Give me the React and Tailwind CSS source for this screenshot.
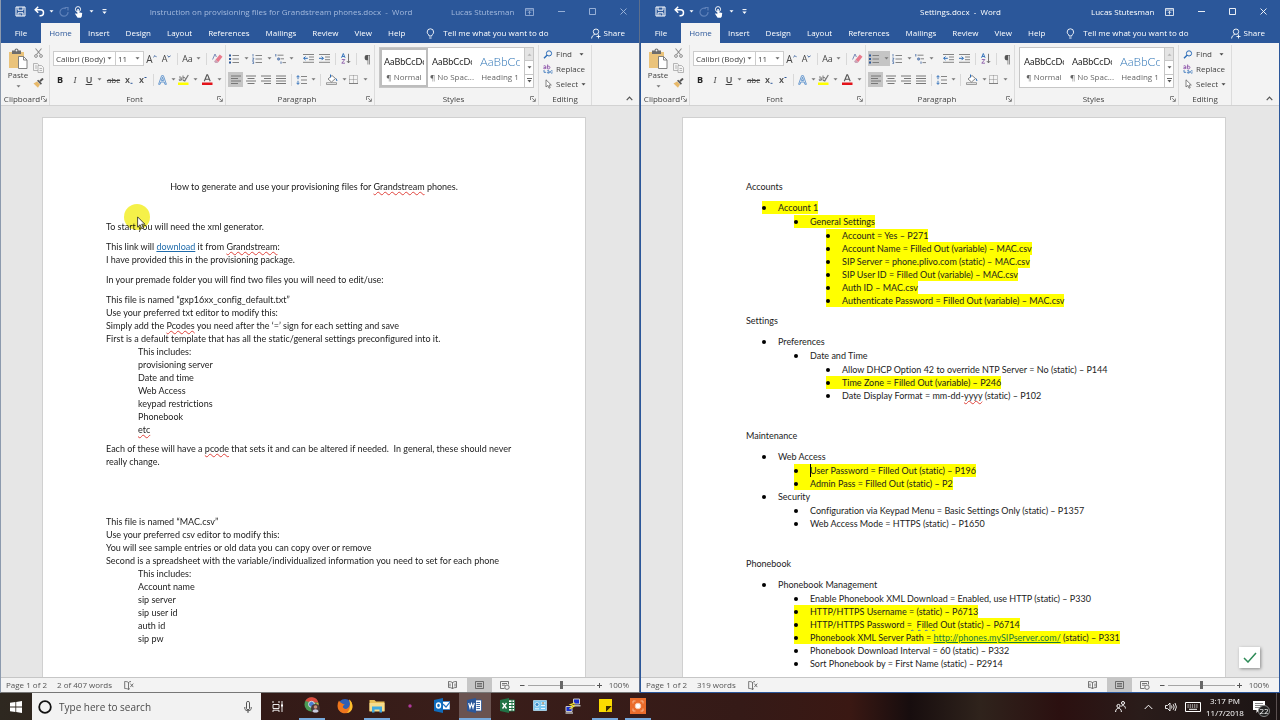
import React from 'react';

/* ---------- small shared pieces ---------- */

function Svg({ w = 12, h = 12, children, className = '' }) {
  return (
    <svg width={w} height={h} viewBox={`0 0 ${w} ${h}`} fill="none" stroke="currentColor" className={`shrink-0 ${className}`} aria-hidden="true">
      {children}
    </svg>
  );
}

const Caret = ({ className = '' }) => (
  <Svg w={5} h={3} className={className}>
    <path d="M0.5 0.3h4L2.5 2.6z" fill="currentColor" stroke="none" />
  </Svg>
);

function Tool({ label, w, active, children, className = '' }) {
  return (
    <button aria-label={label} className={`flex h-[15px] shrink-0 items-center justify-center ${w} ${active ? 'bg-[#c5c5c5]' : ''} ${className}`}>
      {children}
    </button>
  );
}

const Sep = ({ className = '' }) => <span className={`h-3 w-px shrink-0 bg-[#d8d8d8] ${className}`} />;

const Launcher = () => (
  <Svg w={6} h={6} className="text-[#666]">
    <path d="M0.5 4V0.5H4M2.2 2.2L5 5M5.4 2.6V5.4H2.6" strokeWidth="0.8" />
  </Svg>
);

function Group({ label, w, launcher = true, children }) {
  return (
    <section aria-label={label} className={`flex shrink-0 flex-col border-r border-[#dcdcdc] ${w}`}>
      <div className="h-12">{children}</div>
      <footer className="flex h-3 items-center px-[2px]">
        <span className="flex-1 text-center text-[#444]">{label}</span>
        {launcher && (
          <button aria-label={`${label} settings`}>
            <Launcher />
          </button>
        )}
      </footer>
    </section>
  );
}

/* ---------- title bar ---------- */

function TitleBar({ title, active }) {
  const dim = active ? 'text-white' : 'text-[#a3b9dd]';
  return (
    <header className="flex h-[23px] items-center text-white">
      <div className="flex w-[110px] shrink-0 items-center pl-[11px]">
        <button aria-label="Save" className="flex w-4 justify-center">
          <Svg w={11} h={11}>
            <path d="M1 1h9v9H1zM3 1v3.2h5V1M3 10V6.8h5V10M5 8.2v1.6" />
          </Svg>
        </button>
        <button aria-label="Undo" className="ml-1 flex w-5 items-center gap-1">
          <Svg w={11} h={11} className="ml-[2px]">
            <path d="M1.5 3.8h5a2.8 2.8 0 0 1 0 6H5.5M4.2 0.8L1.2 3.8l3 3" strokeWidth="1.5" />
          </Svg>
          <Caret />
        </button>
        <button aria-label="Redo" className="ml-1 flex w-4 justify-center text-[#5f82ba]">
          <Svg w={10} h={10}>
            <path d="M6.8 1.6A4 4 0 1 0 9 5M5.8 0.5H9v3" strokeWidth="1.2" />
          </Svg>
        </button>
        <button aria-label="Touch mode" className="ml-[2px] flex items-center gap-[5px]">
          <Svg w={10} h={12}>
            <circle cx="4" cy="3.2" r="2.6" strokeWidth="0.9" />
            <path d="M3.3 3h1.5v3.3l3.4.8-.4 3.4-.9 1.2H3.6L1 7.8l1-.6 1.3 1z" fill="currentColor" stroke="none" />
          </Svg>
          <Caret />
        </button>
        <button aria-label="Customize toolbar" className="ml-2">
          <Svg w={5} h={6}>
            <path d="M0.5 0.6h4" />
            <path d="M0.4 2.6h4.2L2.5 5z" fill="currentColor" stroke="none" />
          </Svg>
        </button>
      </div>
      <h1 className={`flex-1 truncate text-center whitespace-pre ${dim} ${active ? 'pl-[79px]' : ''}`}>{title}{'  -  '}Word</h1>
      <div className={`flex items-center ${dim}`}>
        <span className="w-[62px] whitespace-nowrap">Lucas Stutesman</span>
        <button aria-label="Ribbon display options" className="flex w-8 justify-center">
          <Svg w={9} h={8}>
            <path d="M0.5 0.5h8v7h-8zM0.5 2h8M4.5 6.5v-3M3 4.8l1.5-1.5L6 4.8" strokeWidth="0.8" />
          </Svg>
        </button>
        <button aria-label="Minimize" className="flex w-8 justify-center">
          <Svg w={7} h={7}><path d="M0 3.5h7" strokeWidth="0.9" /></Svg>
        </button>
        <button aria-label="Maximize" className="flex w-[30px] justify-center">
          <Svg w={7} h={7}><path d="M0.5 0.5h6v6h-6z" strokeWidth="0.9" /></Svg>
        </button>
        <button aria-label="Close" className="flex w-8 justify-center">
          <Svg w={7} h={7}><path d="M0.5 0.5l6 6M6.5 0.5l-6 6" strokeWidth="0.9" /></Svg>
        </button>
      </div>
    </header>
  );
}

const tabs = ['Insert', 'Design', 'Layout', 'References', 'Mailings', 'Review', 'View', 'Help'];

function Tabs() {
  return (
    <nav className="flex h-5 items-stretch font-medium text-white">
      <button className="w-[40px]">File</button>
      <button className="w-[39px] bg-[#f3f3f3] text-[#2b579a]">Home</button>
      {tabs.map((t) => (
        <button key={t} className="px-2">{t}</button>
      ))}
      <button className="ml-[13px] flex items-center gap-2 whitespace-nowrap">
        <Svg w={9} h={11}>
          <path d="M3 8V7C1.8 6.2 1.2 5.3 1.2 4a3.2 3.2 0 0 1 6.4 0c0 1.3-.6 2.2-1.8 3v1zM3.2 10h2.4" strokeWidth="0.9" />
        </Svg>
        Tell me what you want to do
      </button>
      <button className="mr-[14px] ml-auto flex items-center gap-[3px]">
        <Svg w={10} h={11}>
          <circle cx="5" cy="3.7" r="2.7" strokeWidth="0.9" />
          <path d="M0.6 10.5c.2-2.2 1.4-3.6 3.2-4M7.5 6.5v4M5.5 8.5h4" strokeWidth="0.9" />
        </Svg>
        Share
      </button>
    </nav>
  );
}

/* ---------- ribbon ---------- */

function ClipboardGroup() {
  return (
    <Group label="Clipboard" w="w-[49px]">
      <div className="flex h-full pl-[7px]">
        <button className="flex w-5 flex-col items-center text-[#444]">
          <Svg w={20} h={21} className="mt-[3px]">
            <path d="M1 4h15v16H1z" fill="#eac37b" stroke="none" />
            <path d="M4 2.5h2.5a2 2 0 0 1 4 0H13v3.5H4z" fill="#6d6d6d" stroke="none" />
            <circle cx="8.5" cy="2.5" r="0.9" fill="#f3f3f3" stroke="none" />
            <path d="M10.5 8.5h5l3.5 3.500v8.500h-8.500z" fill="#fff" stroke="#777" strokeWidth="0.9" />
            <path d="M15.5 8.5V12H19" stroke="#777" strokeWidth="0.9" />
          </Svg>
          <span className="leading-[12px]">Paste</span>
          <Caret className="mt-1 text-[#777]" />
        </button>
        <div className="flex flex-1 flex-col items-center justify-between pt-[3px] pb-[5px]">
          <button aria-label="Cut">
            <Svg w={9} h={10} className="text-[#8f8f8f]">
              <path d="M1.5 0.5l5 6M7.5 0.5l-5 6" strokeWidth="1.1" />
              <circle cx="2" cy="8" r="1.4" />
              <circle cx="7" cy="8" r="1.4" />
            </Svg>
          </button>
          <button aria-label="Copy">
            <Svg w={11} h={10} className="text-[#a5a5a5]">
              <path d="M0.5 0.5h4l1 1.2v5.8h-5zM2 3h2M2 5h2" strokeWidth="0.8" />
              <path d="M5 2.5h3.5l2 2v5H5z" fill="#f3f3f3" strokeWidth="0.8" />
              <path d="M6.5 5.5h2.5M6.5 7.5h2.5" strokeWidth="0.8" />
            </Svg>
          </button>
          <button aria-label="Format painter">
            <Svg w={11} h={10}>
              <path d="M0.5 5.5L4 3.5l3 3L5 9.700z" fill="#e8b969" stroke="none" />
              <path d="M4 2.8l1.2-1L9 5.6 7.8 6.8z" fill="#555" stroke="none" />
              <path d="M7 3.2L10 0.6" stroke="#555" strokeWidth="2" />
            </Svg>
          </button>
        </div>
      </div>
    </Group>
  );
}

function Combo({ label, value, w }) {
  return (
    <label className={`relative flex h-[15px] items-center border border-[#ccc] bg-white ${w}`}>
      <select aria-label={label} defaultValue={value} className="w-full appearance-none bg-transparent pl-[2px] text-[#444] outline-none">
        <option>{value}</option>
      </select>
      <Caret className="pointer-events-none absolute right-[3px] text-[#666]" />
    </label>
  );
}

function FontGroup() {
  return (
    <Group label="Font" w="w-[176px]">
      <div className="flex flex-col gap-[6px] pt-[6px] pl-[3px] text-[#444]">
        <div className="flex h-[15px] items-center">
          <Combo label="Font name" value="Calibri (Body)" w="w-[63px]" />
          <Combo label="Font size" value="11" w="-ml-px w-[29px]" />
          <Tool label="Grow font" w="w-[15px]" className="text-[10px]">A<Svg w={4} h={7}><path d="M0.4 2.2L2 0.6l1.6 1.6" stroke="#2b579a" strokeWidth="0.9" /></Svg></Tool>
          <Tool label="Shrink font" w="w-[15px]" className="text-[9px]">A<Svg w={4} h={7}><path d="M0.4 0.6L2 2.2l1.6-1.6" stroke="#2b579a" strokeWidth="0.9" /></Svg></Tool>
          <Sep className="mx-[3px]" />
          <Tool label="Change case" w="w-[21px]" className="gap-[3px] text-[9px]">Aa<Caret className="text-[#777]" /></Tool>
          <Sep className="mx-[4px]" />
          <Tool label="Clear formatting" w="w-3">
            <Svg w={11} h={11}>
              <path d="M0.6 6.5L3 1l1.4 3" stroke="#6f7fb0" strokeWidth="0.9" />
              <path d="M3.5 6.8L7.8 1.6l2.7 2.2-4.3 5.4z" fill="#e8798c" stroke="none" />
              <path d="M3.5 6.8l2.7 2.4-.7.7H3.4L2 8.5z" fill="#c9a4b8" stroke="none" />
            </Svg>
          </Tool>
        </div>
        <div className="flex h-[15px] items-center text-[9px]">
          <Tool label="Bold" w="w-[14px]" className="font-bold text-[#222]">B</Tool>
          <Tool label="Italic" w="w-4" className="font-serif italic">I</Tool>
          <Tool label="Underline" w="w-[22px]" className="gap-[5px]"><span className="font-semibold underline">U</span><Caret className="text-[#777]" /></Tool>
          <Tool label="Strikethrough" w="w-[17px]" className="text-[8px] line-through">abc</Tool>
          <Tool label="Subscript" w="w-[14px]" className="font-semibold">x<Svg w={3} h={8}><path d="M0.5 7.300h2" stroke="#2b579a" /></Svg></Tool>
          <Tool label="Superscript" w="w-[14px]" className="font-semibold">x<Svg w={3} h={8}><path d="M0.5 1.5h2" stroke="#2b579a" /></Svg></Tool>
          <Sep className="mx-[3px]" />
          <Tool label="Text effects" w="w-[19px]" className="gap-1">
            <Svg w={9} h={10}>
              <path d="M0.6 9.3L3.6 0.7h1.8l3 8.6H6.9L6.2 7H2.8l-.7 2.3zM3.4 5.5h2.2L4.5 2.3z" stroke="#4a86c8" strokeWidth="0.8" />
            </Svg>
            <Caret className="text-[#777]" />
          </Tool>
          <Tool label="Highlight color" w="w-6" className="gap-1">
            <Svg w={11} h={11}>
              <path d="M0 8.5h10.5V11H0z" fill="#ff0" stroke="none" />
              <path d="M1 3.2c1.5-.9 2.5 0 2.3 1.5v1.8M3.3 5C1.8 4.8.9 5.3 1 6s1.6.7 2.3-.3M5 1.5v5c1.6.8 2.8-.5 2.3-2S5.8 3.2 5 4" stroke="#555" strokeWidth="0.8" />
              <path d="M6.5 7.5L10.3 1" stroke="#777" strokeWidth="1.2" />
            </Svg>
            <Caret className="text-[#777]" />
          </Tool>
          <Tool label="Font color" w="w-6" className="gap-1">
            <Svg w={11} h={11}>
              <path d="M0 8.5h10.5V11H0z" fill="#e3131b" stroke="none" />
              <path d="M2.3 7.300L4.9 0.8h.7l2.6 6.5M3.2 5.2h4" stroke="#555" strokeWidth="1.1" />
            </Svg>
            <Caret className="text-[#777]" />
          </Tool>
        </div>
      </div>
    </Group>
  );
}

const alignments = [
  ['Align left', 'M0 1h10M0 3.5h7M0 6h10M0 8.5h7'],
  ['Center', 'M0 1h10M1.5 3.5h7M0 6h10M1.5 8.5h7'],
  ['Align right', 'M0 1h10M3 3.5h7M0 6h10M3 8.5h7'],
  ['Justify', 'M0 1h10M0 3.5h10M0 6h10M0 8.5h10'],
];

function ParagraphGroup({ bulleted }) {
  return (
    <Group label="Paragraph" w="w-[149px]">
      <div className="flex flex-col gap-[6px] pt-[6px] pl-[2px] text-[#777]">
        <div className="flex h-[15px] items-center">
          <Tool label="Bullets" w="w-[22px]" active={bulleted} className="gap-[5px]">
            <Svg w={10} h={10}>
              <path d="M0 1.5h2M0 5h2M0 8.5h2" stroke="#2b579a" strokeWidth="1.8" />
              <path d="M3.5 1.5H10M3.5 5H10M3.5 8.5H10" strokeWidth="0.9" />
            </Svg>
            <Caret />
          </Tool>
          <Tool label="Numbering" w="w-[23px]" className="gap-[5px]">
            <Svg w={10} h={10}>
              <path d="M1 0v2.5M0.3 4h1.4v1L.4 6.3h1.4M.3 7.7h1.3v2H.3" stroke="#2b579a" strokeWidth="0.7" />
              <path d="M3.5 1.5H10M3.5 5H10M3.5 8.5H10" strokeWidth="0.9" />
            </Svg>
            <Caret />
          </Tool>
          <Tool label="Multilevel list" w="w-[22px]" className="gap-[3px]">
            <Svg w={11} h={10}>
              <path d="M0.8 0v2.5M2.8 4h1.5v2H2.8zM6 7.5v2.3" stroke="#2b579a" strokeWidth="0.8" />
              <path d="M2.5 1.2h6M5.5 4.8H9M7.5 8.6H11" strokeWidth="0.9" />
            </Svg>
            <Caret />
          </Tool>
          <Tool label="Decrease indent" w="w-[17px]" className="ml-[5px]">
            <Svg w={11} h={9}>
              <path d="M0 .5h11M6 3h5M6 5.7h5M0 8.3h11" strokeWidth="0.9" />
              <path d="M4.8 4.3H.6M2.5 2.5L.7 4.3l1.8 1.8" stroke="#2b6cb8" />
            </Svg>
          </Tool>
          <Tool label="Increase indent" w="w-[14px]">
            <Svg w={11} h={9}>
              <path d="M0 .5h11M6 3h5M6 5.7h5M0 8.3h11" strokeWidth="0.9" />
              <path d="M0 4.3h4.4M2.6 2.5l1.8 1.8-1.8 1.8" stroke="#2b6cb8" />
            </Svg>
          </Tool>
          <Sep className="mx-1" />
          <Tool label="Sort" w="w-3">
            <Svg w={10} h={11}>
              <path d="M0.5 4.8L2.3.5l1.8 4.3M1.1 3.5h2.4" stroke="#2b6cb8" strokeWidth="0.9" />
              <path d="M.8 6.5h3L.8 10.2h3.2" stroke="#8a5aa8" strokeWidth="0.9" />
              <path d="M7.5.8v9M5.8 8l1.7 1.9L9.2 8" stroke="#666" strokeWidth="0.9" />
            </Svg>
          </Tool>
          <Sep className="mx-1" />
          <Tool label="Show marks" w="w-[13px]" className="text-[11px] text-[#555]">¶</Tool>
        </div>
        <div className="flex h-[15px] items-center">
          {alignments.map(([label, d], i) => (
            <Tool key={label} label={label} w="w-[15px]" active={i === 0}>
              <Svg w={10} h={10}><path d={d} /></Svg>
            </Tool>
          ))}
          <Sep className="mx-[3px]" />
          <Tool label="Line spacing" w="w-[21px]" className="gap-1">
            <Svg w={11} h={10}>
              <path d="M5 1.5h6M5 5h6M5 8.5h6" strokeWidth="0.9" />
              <path d="M2 .7v3.5M.5 2.2L2 .7l1.5 1.5M2 5.8v3.5M.5 7.8L2 9.3l1.5-1.5" stroke="#2b6cb8" strokeWidth="0.9" />
            </Svg>
            <Caret />
          </Tool>
          <Sep className="mx-1" />
          <Tool label="Shading" w="w-[22px]" className="gap-1">
            <Svg w={12} h={11}>
              <path d="M2 5l4-3.5 3.5 3L5.5 8z" fill="#fff" strokeWidth="0.9" />
              <path d="M4.5.5v3M10 4.5l1 2.5" stroke="#2b6cb8" />
              <path d="M0.5 8.700h10v1.8h-10z" strokeWidth="0.7" />
            </Svg>
            <Caret />
          </Tool>
          <Tool label="Borders" w="w-[22px]" className="gap-[5px]">
            <Svg w={9} h={9}>
              <path d="M.5.5h8v8h-8zM4.5.5v8M.5 4.5h8" strokeWidth="0.8" strokeDasharray="1 1" />
              <path d="M0 8.5h9" strokeWidth="0.9" />
            </Svg>
            <Caret />
          </Tool>
        </div>
      </div>
    </Group>
  );
}

const styleList = [
  ['¶ Normal', 'text-[#222] text-[9px]', 'AaBbCcDc'],
  ['¶ No Spac...', 'text-[#222] text-[9px]', 'AaBbCcDc'],
  ['Heading 1', 'text-[#2e74b5] text-[12px] font-light', 'AaBbCc'],
];

function StylesGroup({ selected }) {
  return (
    <Group label="Styles" w="w-[164px]">
      <div className="mt-[2px] ml-1 flex h-[41px] w-[155px] border border-[#c6c6c6] bg-white">
        {styleList.map(([name, cls, sample], i) => (
          <button key={name} className={`flex h-full w-12 shrink-0 flex-col items-center border-2 ${selected === i ? 'border-[#bdbdbd]' : 'border-transparent'}`}>
            <span className={`mt-1 w-10 overflow-hidden text-left font-[Lato,sans-serif] leading-[16px] whitespace-nowrap ${cls}`}>{sample}</span>
            <span className="text-[8px] leading-[14px] whitespace-nowrap text-[#666]">{name}</span>
          </button>
        ))}
        <div className="ml-auto flex w-[9px] flex-col divide-y divide-[#c6c6c6] border-l border-[#c6c6c6] text-[#555]">
          <button aria-label="Previous styles" className="flex flex-1 items-center justify-center bg-[#e4e4e4]"><Caret className="rotate-180 text-[#b5b5b5]" /></button>
          <button aria-label="Next styles" className="flex flex-1 items-center justify-center"><Caret /></button>
          <button aria-label="More styles" className="flex flex-1 items-center justify-center">
            <Svg w={5} h={5}>
              <path d="M0 .5h5" strokeWidth="0.9" />
              <path d="M0.5 2h4l-2 2.4z" fill="currentColor" stroke="none" />
            </Svg>
          </button>
        </div>
      </div>
    </Group>
  );
}

function EditingGroup() {
  return (
    <Group label="Editing" w="w-[53px]" launcher={false}>
      <div className="flex h-full flex-col gap-[3px] pt-[3px] pl-1 text-[#444]">
        <button className="flex h-3 items-center gap-[3px]">
          <Svg w={10} h={9}><circle cx="6" cy="3.4" r="2.6" stroke="#2b6cb8" /><path d="M4 5.3L1 8.3" stroke="#2b6cb8" strokeWidth="1.5" /></Svg>
          Find<Caret className="ml-1" />
        </button>
        <button className="flex h-3 items-center gap-[3px]">
          <Svg w={10} h={10}>
            <path d="M.6 2c1.3-.7 2.2-.2 2.2.8v2M2.8 3.4C1.5 3.3.6 3.6.6 4.2s1.4.7 2.2-.1M4.6.5v4.300c1.3.5 2.3-.2 2.3-1.3s-1-1.7-2.3-.9" stroke="#8a4fa8" strokeWidth="0.9" />
            <path d="M9.6 7c-1-.6-2-.3-2 .9s1 1.5 2 .9M4.3 6.7c1-.5 1.900-.1 1.9.8v1.7M6.2 8c-1-.1-1.9.2-1.9.7s1.2.6 1.9 0M1 6v2.3h2" stroke="#2b6cb8" strokeWidth="0.8" />
          </Svg>
          Replace
        </button>
        <button className="flex h-3 items-center gap-[3px]">
          <Svg w={10} h={10}><path d="M3 .8v7.2l1.8-1.6 1.2 2.8 1.2-.5L6 6h2.3z" fill="#fff" strokeWidth="0.8" stroke="#666" /></Svg>
          Select<Caret />
        </button>
      </div>
    </Group>
  );
}

function Ribbon({ bulleted, selectedStyle }) {
  return (
    <div className="flex border-b border-[#d2d2d2] bg-[#f3f3f3] pt-[2px]">
      <ClipboardGroup />
      <FontGroup />
      <ParagraphGroup bulleted={bulleted} />
      <StylesGroup selected={selectedStyle} />
      <EditingGroup />
      <button aria-label="Collapse ribbon" className="mt-auto mr-[6px] mb-1 ml-auto text-[#555]">
        <Svg w={7} h={5}><path d="M.7 4.2L3.5 1.2l2.8 3" strokeWidth="1.2" /></Svg>
      </button>
    </div>
  );
}

/* ---------- status bar ---------- */

function StatusBar({ words, name }) {
  return (
    <footer className="flex h-[15px] shrink-0 items-center border-t border-[#c6c6c6] bg-[#f3f3f3] pl-[5px] text-[#555]">
      <span className="w-[51px]">Page 1 of 2</span>
      <span>{words}</span>
      <Svg w={10} h={9} className="ml-3">
        <path d="M4.5 1.5C3.5.6 2 .5.7.5v7c1.3 0 2.8.1 3.8 1 .5-.5 1-.8 1.5-.9M4.5 1.5v7M4.5 1.5C5.2.8 6 .6 7 .5M6.3 2.6l3 3.5M9.3 2.6l-3 3.5" strokeWidth="0.8" />
      </Svg>
      <div className="mr-[10px] ml-auto flex h-full items-center">
        <button aria-label="Read mode" className="flex w-7 justify-center">
          <Svg w={9} h={8}><path d="M.5.5c1.5 0 3 .2 4 1 1-.8 2.5-1 4-1v6c-1.5 0-3 .2-4 1-1-.8-2.5-1-4-1zM4.5 1.5v6M2 2.5v3M7 2.5v3" strokeWidth="0.8" /></Svg>
        </button>
        <button aria-label="Print layout" className="flex h-full w-[25px] items-center justify-center bg-[#c6c6c6]">
          <Svg w={9} h={8}><path d="M.5.5h8v7h-8zM2 2.5h5M2 4h5M2 5.5h5" strokeWidth="0.8" /></Svg>
        </button>
        <button aria-label="Web layout" className="flex w-[26px] justify-center">
          <Svg w={10} h={9}><path d="M8.5 3.5v-3h-8v7h4M2 2.5h5M2 4.2h3" strokeWidth="0.8" /><circle cx="7" cy="6.2" r="2.2" strokeWidth="0.8" /></Svg>
        </button>
        <button aria-label="Zoom out" className="flex w-[10px] justify-center"><Svg w={5} h={5}><path d="M0 2.5h4.5" /></Svg></button>
        <input
          type="range"
          aria-label={`Zoom ${name}`}
          min="0"
          max="100"
          defaultValue="50"
          className="h-2 w-[67px] appearance-none bg-transparent [&::-webkit-slider-runnable-track]:h-px [&::-webkit-slider-runnable-track]:bg-[#a5a5a5] [&::-webkit-slider-thumb]:mt-[-4px] [&::-webkit-slider-thumb]:h-2 [&::-webkit-slider-thumb]:w-[3px] [&::-webkit-slider-thumb]:appearance-none [&::-webkit-slider-thumb]:bg-[#666]"
        />
        <button aria-label="Zoom in" className="flex w-[10px] justify-center"><Svg w={5} h={5}><path d="M0 2.5h5M2.5 0v5" /></Svg></button>
        <span className="ml-1">100%</span>
      </div>
    </footer>
  );
}

/* ---------- documents ---------- */

const Err = ({ children, color = 'decoration-[#e0433c]' }) => (
  <span className={`underline decoration-wavy decoration-1 underline-offset-1 [text-decoration-skip-ink:none] ${color}`}>{children}</span>
);

function Page({ children }) {
  return (
    <article className="relative mr-[53px] ml-[41px] min-h-full border border-b-0 border-[#d0d0d0] bg-white px-[63px] pt-[62px] font-[Lato,sans-serif] text-[9px] leading-[13px] text-[#1c1c1c] [font-variant-ligatures:none]">
      {children}
    </article>
  );
}

function Instructions() {
  return (
    <Page>
      <p className="text-center">How to generate and use your provisioning files for <Err>Grandstream</Err> phones.</p>
      <p className="mt-[27px]">To start you will need the xml generator.</p>
      <p className="mt-[7px]">
        This link will <a href="#download" className="text-[#1f6bab] underline">download</a> it from <Err>Grandstream</Err>:<br />
        I have provided this in the provisioning package.
      </p>
      <p className="mt-[7px]">In your premade folder you will find two files you will need to edit/use:</p>
      <p className="mt-[7px]">
        This file is named “gxp16xx_config_default.txt”<br />
        Use your preferred txt editor to modify this:<br />
        Simply add the <Err>Pcodes</Err> you need after the ‘=’ sign for each setting and save<br />
        First is a default template that has all the static/general settings preconfigured into it.
      </p>
      <div className="pl-8">
        <p>This includes:</p>
        <p>provisioning server</p>
        <p>Date and time</p>
        <p>Web Access</p>
        <p>keypad restrictions</p>
        <p>Phonebook</p>
        <p><Err>etc</Err></p>
      </div>
      <p className="mt-[6px]">
        Each of these will have a <Err>pcode</Err> that sets it and can be altered if needed.&nbsp; In general, these should never<br />
        really change.
      </p>
      <p className="mt-[47px]">
        This file is named “MAC.csv”<br />
        Use your preferred csv editor to modify this:<br />
        You will see sample entries or old data you can copy over or remove<br />
        Second is a spreadsheet with the variable/individualized information you need to set for each phone
      </p>
      <div className="pl-8">
        <p>This includes:</p>
        <p>Account name</p>
        <p>sip server</p>
        <p>sip user id</p>
        <p>auth id</p>
        <p>sip pw</p>
      </div>
      <span className="absolute top-[86px] left-[81px] size-[26px] rounded-full bg-[#f2ee1c]/80 mix-blend-multiply" />
      <Svg w={9} h={14} className="absolute top-[98px] left-[94px]">
        <path d="M.6.9v10.2l2.500-2.300 1.700 3.900 1.600-.7-1.700-3.800h3.200z" fill="#fff" stroke="#222" strokeWidth="0.8" />
      </Svg>
    </Page>
  );
}

function Item({ hl, children, text, caret }) {
  return (
    <li>
      <span className={`inline-flex h-[13px] whitespace-pre align-top ${hl ? 'bg-[#ff0]' : ''}`}>
        <span className="flex w-4 items-center"><i className="size-[4px] rounded-full bg-black" /></span>
        {caret && <span className="-mr-px h-[13px] w-px bg-black" />}
        <span>{text}</span>
      </span>
      {children && <ul className="mt-px pl-8">{children}</ul>}
    </li>
  );
}

function SettingsDoc() {
  return (
    <Page>
      <h2>Accounts</h2>
      <ul className="mt-2 pl-4">
        <Item hl text="Account 1">
          <Item hl text="General Settings">
            <Item hl text="Account = Yes – P271" />
            <Item hl text="Account Name = Filled Out (variable) – MAC.csv" />
            <Item hl text="SIP Server = phone.plivo.com (static) – MAC.csv" />
            <Item hl text="SIP User ID = Filled Out (variable) – MAC.csv" />
            <Item hl text="Auth ID – MAC.csv" />
            <Item hl text="Authenticate Password = Filled Out (variable) – MAC.csv" />
          </Item>
        </Item>
      </ul>
      <h2 className="mt-[7px]">Settings</h2>
      <ul className="mt-2 pl-4">
        <Item text="Preferences">
          <Item text="Date and Time">
            <Item text="Allow DHCP Option 42 to override NTP Server = No (static) – P144" />
            <Item hl text="Time Zone = Filled Out (variable) – P246" />
            <Item text={<>Date Display Format = mm-dd-<Err>yyyy</Err> (static) – P102</>} />
          </Item>
        </Item>
      </ul>
      <h2 className="mt-[27px]">Maintenance</h2>
      <ul className="mt-2 pl-4">
        <Item text="Web Access">
          <Item hl caret text="User Password = Filled Out (static) – P196" />
          <Item hl text="Admin Pass = Filled Out (static) – P2" />
        </Item>
        <Item text="Security">
          <Item text="Configuration via Keypad Menu = Basic Settings Only (static) – P1357" />
          <Item text="Web Access Mode = HTTPS (static) – P1650" />
        </Item>
      </ul>
      <h2 className="mt-[27px]">Phonebook</h2>
      <ul className="mt-2 pl-4">
        <Item text="Phonebook Management">
          <Item text="Enable Phonebook XML Download = Enabled, use HTTP (static) – P330" />
          <Item hl text="HTTP/HTTPS Username = (static) – P6713" />
          <Item hl text={<>HTTP/HTTPS Password <Err color="decoration-[#3b6fc4]">=  Filled</Err> Out (static) – P6714</>} />
          <Item hl text={<>Phonebook XML Server Path = <a href="http://phones.mySIPserver.com/" className="text-[#1c7a3c] underline">http://phones.mySIPserver.com/</a> (static) – P331</>} />
          <Item text="Phonebook Download Interval = 60 (static) – P332" />
          <Item text="Sort Phonebook by = First Name (static) – P2914" />
        </Item>
      </ul>
    </Page>
  );
}

function WordWindow({ title, words, active, children }) {
  return (
    <section aria-label={title} className={`flex min-w-0 flex-col border border-t-0 ${active ? 'border-[#2b579a]' : 'border-r-[#5d6f8c] border-b-[#777] border-l-[#8c9aae]'}`}>
      <div className="bg-[#2b579a]">
        <TitleBar title={title} active={active} />
        <Tabs />
      </div>
      <Ribbon bulleted={active} selectedStyle={active ? -1 : 0} />
      <div className="relative min-h-0 flex-1 overflow-hidden bg-[#e6e6e6] pt-[11px]">
        {children}
        {active && (
          <button aria-label="Confirm" className="absolute right-[19px] bottom-[9px] flex size-[21px] items-center justify-center bg-white shadow-[1px_1px_3px_rgba(0,0,0,0.4)]">
            <Svg w={14} h={11}><path d="M1 6l4 4 8-9" stroke="#2e8b57" strokeWidth="1.5" /></Svg>
          </button>
        )}
      </div>
      <StatusBar words={words} name={title} />
    </section>
  );
}

/* ---------- taskbar ---------- */

const apps = [
  { name: 'Chrome', open: true, icon: (
    <Svg w={17} h={17}>
      <circle cx="7.5" cy="7.5" r="7" fill="#4b9b55" stroke="none" />
      <path d="M1.3 4A7 7 0 0 1 14.3 5.5H7.5z" fill="#dd4b3e" stroke="none" />
      <path d="M14.3 5.5a7 7 0 0 1-6 9L10.5 8z" fill="#e8c243" stroke="none" />
      <circle cx="7.5" cy="7.3" r="3" fill="#4a7fd0" stroke="#ddd" />
      <circle cx="11.5" cy="11.5" r="4.5" fill="#4a3a3a" stroke="none" />
      <circle cx="11.5" cy="10" r="1.8" fill="#c9927a" stroke="none" />
      <path d="M8.5 14.5c.5-3 5.5-3 6 0l-1.5 1h-3z" fill="#c8cbe0" stroke="none" />
    </Svg>) },
  { name: 'Firefox', icon: (
    <Svg w={16} h={16}>
      <circle cx="8" cy="8" r="7" fill="#2f5fb5" stroke="none" />
      <path d="M2 2.5C0 6 0 10 2.3 12.8 6 17 13 15.8 15 11c1-3 .5-7-3-9.5 1 2 1.5 4 .5 6C11.5 11 7.5 12 6 9.5 5.5 8 6.5 7 8 7 6 5.5 3.5 5.5 2 2.5z" fill="#f0761d" stroke="none" />
      <path d="M12 1.5c3 2 4 6 3 9.5-1 2.5-3 4-5.500 4.300C13 12.5 14 7 12 1.5z" fill="#fbc02d" stroke="none" />
    </Svg>) },
  { name: 'File Explorer', open: true, icon: (
    <Svg w={16} h={14}>
      <path d="M.5 1h5l1.5 1.5h8.5V12H.5z" fill="#e9bf57" stroke="none" />
      <path d="M.5 4h15v8.5H.5z" fill="#f7dc8b" stroke="none" />
      <path d="M3 13.5V7.5h10v6h-2.5v-3h-5v3z" fill="#3fa9e0" stroke="none" />
    </Svg>) },
  { name: 'Slack', icon: (
    <Svg w={4} h={4}><circle cx="2" cy="2" r="1.7" fill="#b03a9c" stroke="none" /></Svg>) },
  { name: 'Outlook', icon: (
    <Svg w={16} h={15}>
      <path d="M8 3.5h8v8H8z" fill="#fff" stroke="#2a7fd0" strokeWidth="0.8" />
      <path d="M9 6l3 3 4-5" stroke="#1f6fc0" strokeWidth="1.2" />
      <path d="M0 2l9-2v15l-9-2z" fill="#0f6cbd" stroke="none" />
      <ellipse cx="4.5" cy="7.5" rx="2" ry="2.5" stroke="#fff" strokeWidth="1.4" />
    </Svg>) },
  { name: 'Word', open: true, active: true, icon: (
    <Svg w={15} h={15}>
      <path d="M8 2h6.5v11H8z" fill="#fff" stroke="#2b579a" strokeWidth="0.8" />
      <path d="M9.5 4.5H13M9.5 6.5H13M9.5 8.5H13M9.5 10.5H13" stroke="#2b579a" strokeWidth="0.9" />
      <path d="M0 2l9-2v15l-9-2z" fill="#2b579a" stroke="none" />
      <path d="M1.7 5l1.3 5 1.5-4.5L6 10l1.3-5" stroke="#fff" strokeWidth="1.1" />
    </Svg>) },
  { name: 'Excel', icon: (
    <Svg w={15} h={15}>
      <path d="M8 2h6.5v11H8z" fill="#fff" stroke="#217346" strokeWidth="0.8" />
      <path d="M9 4.5h5M9 7.5h5M9 10.5h5M12 2v11" stroke="#217346" strokeWidth="1" />
      <path d="M0 2l9-2v15l-9-2z" fill="#217346" stroke="none" />
      <path d="M2.5 5l4 5.5M6.5 5l-4 5.5" stroke="#fff" strokeWidth="1.3" />
    </Svg>) },
  { name: 'Control Panel', icon: (
    <Svg w={14} h={11}>
      <path d="M.5.5h13v10H.5z" fill="#7cc7ee" stroke="#b5e0f5" strokeWidth="0.8" />
      <circle cx="4" cy="4.5" r="2" fill="#3a8bc8" stroke="#fff" strokeWidth="0.7" />
      <path d="M8 3h1.5M8 5.5h4M11 3h1.5M2 8.8h4M8 8.5h4" stroke="#f5fbff" strokeWidth="0.9" />
      <path d="M10 2v2.5" stroke="#e08a3c" />
    </Svg>) },
  { name: 'PuTTY', icon: (
    <Svg w={16} h={16}>
      <path d="M8.5 1h6v5h-6zM1 8.5h6v5H1z" fill="#1a2fd0" stroke="#c8c8c8" />
      <path d="M8 7.7h7.5M.5 15h7.5" stroke="#b8b8b8" strokeWidth="1.4" />
      <path d="M10 5L5.5 6.5 9 8l-4.5 3" stroke="#f5e42a" strokeWidth="1.3" />
    </Svg>) },
  { name: 'Sticky Notes', open: true, icon: (
    <Svg w={13} h={13}>
      <path d="M0 0h13v13H0z" fill="#fbdc00" stroke="none" />
      <path d="M7 7h6l-6 6z" fill="#3a2d00" stroke="none" />
      <path d="M13 7v6H7z" fill="#e8c800" stroke="none" />
    </Svg>) },
  { name: 'Screen recorder', open: true, icon: (
    <Svg w={16} h={16}>
      <path d="M0 0h16v16H0z" fill="#ea6c2b" stroke="none" />
      <path d="M3 5.5V3h2.5M10.5 3H13v2.5M13 10.5V13h-2.5M5.5 13H3v-2.5" stroke="#f7b58e" />
      <circle cx="8" cy="8" r="2.8" fill="#fff" stroke="#f9cbb0" />
    </Svg>) },
];

function Taskbar() {
  return (
    <footer className="flex h-[27px] shrink-0 items-stretch bg-[linear-gradient(90deg,#2e2820_0px,#331a17_260px,#3a1e1a_460px,#351a17_740px,#3a1813_850px,#170d0e_910px,#2f231c_980px,#2b1010_1060px,#2a1c1a_1140px,#1b1414_1280px)] text-white">
      <button aria-label="Start" className="flex w-8 items-center justify-center">
        <Svg w={12} h={12}>
          <path d="M0 1.8l5.4-.8v4.6H0zM6.2.9L12 0v5.6H6.2zM0 6.4h5.4V11L0 10.2zM6.2 6.4H12V12l-5.8-.9z" fill="#fff" stroke="none" />
        </Svg>
      </button>
      <label className="flex w-[229px] items-center bg-[#f2f2f2] pr-[9px] pl-[6px]">
        <Svg w={14} h={14}><circle cx="7" cy="7" r="5.8" stroke="#111" strokeWidth="1.8" /></Svg>
        <input type="text" aria-label="Type here to search" placeholder="Type here to search" className="ml-[7px] min-w-0 flex-1 bg-transparent text-[10px] leading-[14px] outline-none placeholder:text-[#4a4a4a]" />
        <Svg w={8} h={12} className="text-[#444]">
          <path d="M2.5 1.5a1.5 1 0 0 1 3 0v6a1.5 1.2 0 0 1-3 0zM.8 6v1.5c0 3 6.4 3 6.4 0V6M4 9.8V12" strokeWidth="0.9" />
        </Svg>
      </label>
      <button aria-label="Task view" className="flex w-[33px] items-center justify-center">
        <Svg w={11} h={11}><path d="M1 0v2M7 0v2M1 3.5h6v4H1zM1 11V9.2h6V11M10 0v11" strokeWidth="0.9" /><path d="M9 3.5h2v2H9z" fill="#fff" stroke="none" /></Svg>
      </button>
      <nav aria-label="Pinned apps" className="ml-[2px] grid w-[358px] grid-cols-11">
        {apps.map((a) => (
          <button key={a.name} aria-label={a.name} className={`flex flex-col items-center ${a.active ? 'bg-[#6a5350]' : ''}`}>
            <span className="flex flex-1 items-center">{a.icon}</span>
            <span className={`h-[2px] ${a.active ? 'w-full' : 'w-[26px]'} ${a.open ? 'bg-[#76a9dc]' : ''}`} />
          </button>
        ))}
      </nav>
      <div className="mr-[3px] ml-auto flex items-center border-r border-[#5a5050]">
        <button aria-label="People" className="flex w-6 justify-center">
          <Svg w={11} h={12}><circle cx="3.5" cy="5" r="1.6" /><path d="M.6 11c0-5 5.8-5 5.8 0" /><circle cx="8" cy="2" r="1.5" /><path d="M6 5.5c1.5-1.7 4.4-1 4.4 2" /></Svg>
        </button>
        <button aria-label="Hidden icons" className="ml-1 flex w-6 justify-center"><Svg w={9} h={6}><path d="M.7 5L4.5 1.2 8.3 5" /></Svg></button>
        <button aria-label="Volume" className="flex w-[22px] justify-center">
          <Svg w={12} h={10}><path d="M.5 3.5h2L5 1v8L2.5 6.5h-2zM6.5 3.5q1 1.5 0 3M8.2 2.2q2 2.8 0 5.6M10 1q2.8 4 0 8" strokeWidth="0.9" /></Svg>
        </button>
        <button aria-label="Keyboard" className="flex w-[21px] justify-center">
          <Svg w={16} h={10}><path d="M.5.5h15v9H.5z" /><path d="M2.5 3h11M2.5 5h11" strokeDasharray="1.2 1" /><path d="M4 7.3h8" /></Svg>
        </button>
        <button className="flex w-11 flex-col items-center leading-[12px]"><span>3:17 PM</span><span>11/7/2018</span></button>
        <button aria-label="22 notifications" className="relative flex w-[29px] justify-center pr-[6px]">
          <Svg w={12} h={12}><path d="M0 0h12v9H6l-2.5 3V9H0z" fill="#fff" stroke="none" /><path d="M2 2.5h8M2 4.5h8M2 6.5h5" stroke="#555" strokeWidth="0.7" /></Svg>
          <span className="absolute top-1 left-[11px] flex size-3 items-center justify-center rounded-full border border-[#888] bg-[#222] leading-none">22</span>
        </button>
      </div>
    </footer>
  );
}

export default function App() {
  return (
    <div className="flex h-screen flex-col overflow-hidden bg-[#2a1715] font-['Open_Sans','Noto_Sans',sans-serif] text-[8px] leading-[12px]">
      <main className="grid min-h-0 flex-1 grid-cols-2">
        <WordWindow title="Instruction on provisioning files for Grandstream phones.docx" words="2 of 407 words">
          <Instructions />
        </WordWindow>
        <WordWindow title="Settings.docx" words="319 words" active>
          <SettingsDoc />
        </WordWindow>
      </main>
      <Taskbar />
    </div>
  );
}
